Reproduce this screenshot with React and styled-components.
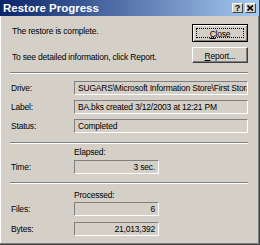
import React from "react";
import styled, { createGlobalStyle } from "styled-components";

const GlobalStyle = createGlobalStyle`
  body {
    margin: 0;
    background: #d4d0c8;
  }
`;

const Window = styled.div`
  width: 260px;
  height: 245px;
  box-sizing: border-box;
  background: #d4d0c8;
  display: flex;
  flex-direction: column;
  border-right: 1px solid #404040;
  border-bottom: 1px solid #404040;
  box-shadow: inset -1px -1px #808080, inset 1px 0 #ffffff;
  font-family: "Liberation Sans", Arial, sans-serif;
  font-size: 8.5px;
  letter-spacing: -0.2px;
  color: #000;
`;

const TitleBar = styled.div`
  height: 16px;
  display: flex;
  align-items: center;
  padding: 0 3px 0 3px;
  background: linear-gradient(to right, #0a246a, #a6caf0);
`;

const Title = styled.span`
  flex: 1;
  color: #fff;
  font-weight: bold;
  font-size: 11.5px;
  letter-spacing: 0;
  line-height: 16px;
`;

const TitleButtons = styled.div`
  display: flex;
  gap: 2px;
`;

const TitleButton = styled.div`
  width: 11px;
  height: 10px;
  box-sizing: border-box;
  background: #d4d0c8;
  border-top: 1px solid #fff;
  border-left: 1px solid #fff;
  border-right: 1px solid #404040;
  border-bottom: 1px solid #404040;
  display: flex;
  align-items: center;
  justify-content: center;
  font-weight: bold;
  font-size: 9px;
  letter-spacing: 0;
  line-height: 8px;
`;

const Content = styled.div`
  padding: 8px 11px 0 10px;
  display: flex;
  flex-direction: column;
`;

const TopRow = styled.div`
  display: flex;
  justify-content: space-between;
`;

const Messages = styled.div`
  display: flex;
  flex-direction: column;
  padding-left: 2px;
`;

const Message = styled.div`
  line-height: 12px;
  margin-top: ${(p) => p.$top}px;
  white-space: nowrap;
`;

const Buttons = styled.div`
  display: flex;
  flex-direction: column;
  gap: 5px;
`;

const Button = styled.div`
  width: 56px;
  height: ${(p) => (p.$default ? 18 : 16)}px;
  box-sizing: border-box;
  background: #d4d0c8;
  display: flex;
  align-items: center;
  justify-content: center;
  border: 1px solid;
  border-color: ${(p) =>
    p.$default ? "#000" : "#fff #404040 #404040 #fff"};
  box-shadow: ${(p) =>
    p.$default
      ? "inset 1px 1px #fff, inset -1px -1px #808080"
      : "inset -1px -1px #808080"};
  position: relative;
  padding-top: 1px;
`;

const FocusRect = styled.span`
  position: absolute;
  inset: 3px;
  border: 1px dotted #000;
`;

const Key = styled.span`
  text-decoration: underline;
`;

const Separator = styled.div`
  height: 0;
  border-top: 1px solid #808080;
  border-bottom: 1px solid #fff;
  margin-top: ${(p) => p.$top}px;
`;

const Row = styled.div`
  display: grid;
  grid-template-columns: 64px 1fr;
  align-items: center;
  margin-top: ${(p) => p.$top}px;
`;

const Label = styled.span`
  padding-left: 1px;
  line-height: 12px;
`;

const Field = styled.div`
  height: 14px;
  box-sizing: border-box;
  width: ${(p) => (p.$narrow ? "85px" : "auto")};
  border-top: 1px solid #808080;
  border-left: 1px solid #808080;
  border-right: 1px solid #fff;
  border-bottom: 1px solid #fff;
  padding: 0 3px;
  line-height: 12px;
  white-space: nowrap;
  overflow: hidden;
  text-align: ${(p) => (p.$right ? "right" : "left")};
`;

const Heading = styled.div`
  margin-top: ${(p) => p.$top}px;
  padding-left: 64px;
  line-height: 12px;
`;

const XIcon = () => (
  <svg width="7" height="6" viewBox="0 0 7 6">
    <path d="M0.5 0.5 L6 5.5 M6 0.5 L0.5 5.5" stroke="#000" strokeWidth="1.6" />
  </svg>
);

const App = () => {
  return (
    <Window>
      <GlobalStyle />
      <TitleBar>
        <Title>Restore Progress</Title>
        <TitleButtons>
          <TitleButton>?</TitleButton>
          <TitleButton>
            <XIcon />
          </TitleButton>
        </TitleButtons>
      </TitleBar>
      <Content>
        <TopRow>
          <Messages>
            <Message $top={1}>The restore is complete.</Message>
            <Message $top={14}>To see detailed information, click Report.</Message>
          </Messages>
          <Buttons>
            <Button $default>
              <FocusRect />
              <Key>C</Key>lose
            </Button>
            <Button>
              <Key>R</Key>eport...
            </Button>
          </Buttons>
        </TopRow>
        <Separator $top={9} />
        <Row $top={7}>
          <Label>Drive:</Label>
          <Field>SUGARS\Microsoft Information Store\First Storage Group</Field>
        </Row>
        <Row $top={5}>
          <Label>Label:</Label>
          <Field>BA.bks created 3/12/2003 at 12:21 PM</Field>
        </Row>
        <Row $top={5}>
          <Label>Status:</Label>
          <Field>Completed</Field>
        </Row>
        <Separator $top={9} />
        <Heading $top={2}>Elapsed:</Heading>
        <Row $top={2}>
          <Label>Time:</Label>
          <Field $narrow $right>3 sec.</Field>
        </Row>
        <Separator $top={8} />
        <Heading $top={5}>Processed:</Heading>
        <Row $top={1}>
          <Label>Files:</Label>
          <Field $narrow $right>6</Field>
        </Row>
        <Row $top={6}>
          <Label>Bytes:</Label>
          <Field $narrow $right>21,013,392</Field>
        </Row>
      </Content>
    </Window>
  );
};

export default App;
